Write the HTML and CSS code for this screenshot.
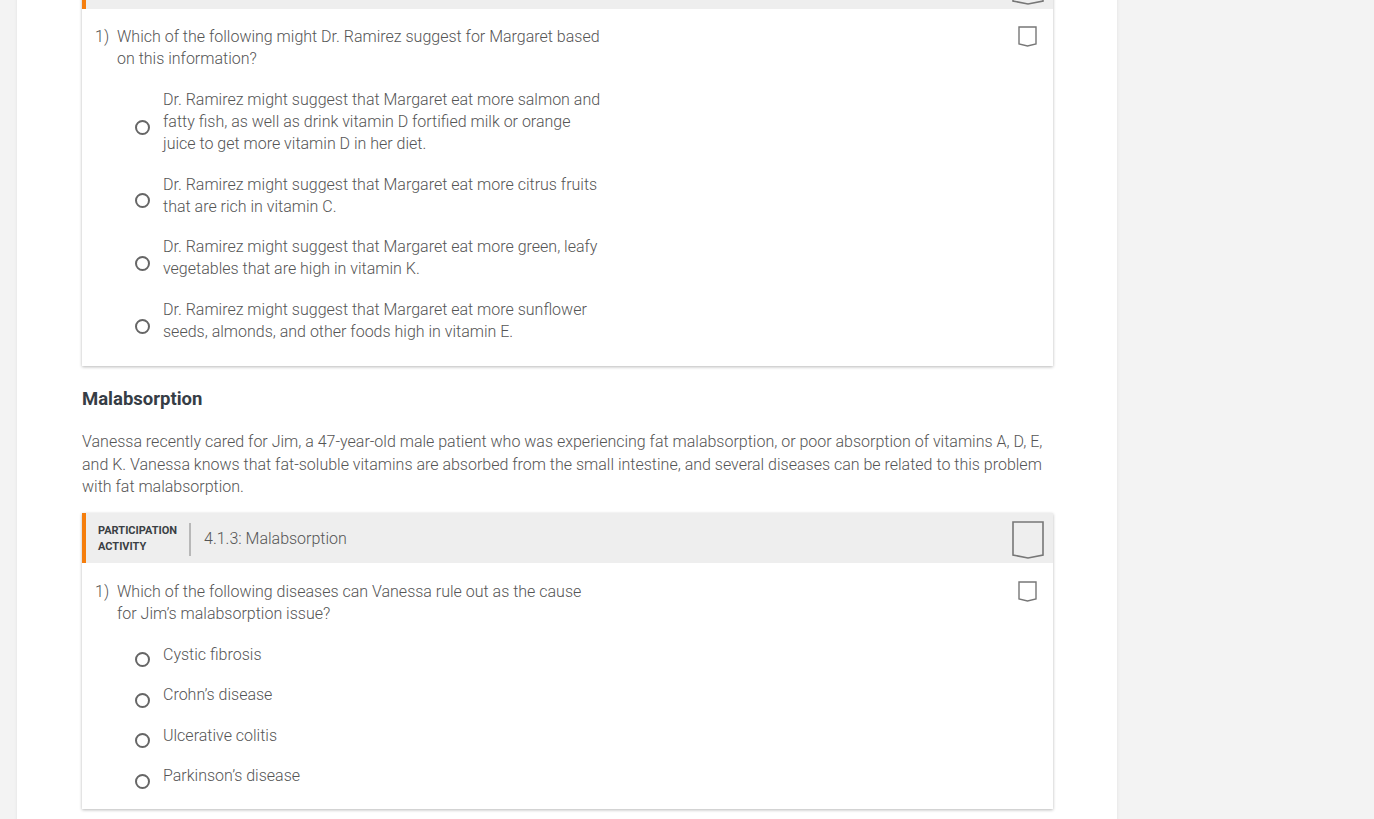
FILE: index.html
```html
<!DOCTYPE html>
<html lang="en">
<head>
<meta charset="utf-8">
<title>Fat-soluble vitamins</title>
<link rel="stylesheet" href="styles.css">
</head>
<body>
<div class="page">
  <div class="content">
    <section class="card">
      <div class="card-header">
        <div class="header-fill"></div>
        <svg class="bookmark big" viewBox="0 0 32 38"><path d="M1 1 H31 V34 L16 37 L1 34 Z" fill="none" stroke="#777" stroke-width="1.6"/></svg>
      </div>
      <div class="card-body first">
        <div class="question">
          <div class="qtext"><span class="num">1)</span><span class="qlabel">Which of the following might Dr. Ramirez suggest for Margaret based on this information?</span></div>
          <svg class="bookmark small" viewBox="0 0 19 21"><path d="M1 1 H18 V18 L9.5 20 L1 18 Z" fill="none" stroke="#777" stroke-width="1.4"/></svg>
        </div>
        <ul class="options">
          <li><span class="radio"></span><span class="opt">Dr. Ramirez might suggest that Margaret eat more salmon and fatty fish, as well as drink vitamin D fortified milk or orange juice to get more vitamin D in her diet.</span></li>
          <li><span class="radio"></span><span class="opt">Dr. Ramirez might suggest that Margaret eat more citrus fruits that are rich in vitamin C.</span></li>
          <li><span class="radio"></span><span class="opt">Dr. Ramirez might suggest that Margaret eat more green, leafy vegetables that are high in vitamin K.</span></li>
          <li><span class="radio"></span><span class="opt">Dr. Ramirez might suggest that Margaret eat more sunflower seeds, almonds, and other foods high in vitamin E.</span></li>
        </ul>
      </div>
    </section>

    <h2 class="heading">Malabsorption</h2>
    <p class="para">Vanessa recently cared for Jim, a 47-year-old male patient who was experiencing fat malabsorption, or poor absorption of vitamins A, D, E, and K. Vanessa knows that fat-soluble vitamins are absorbed from the small intestine, and several diseases can be related to this problem with fat malabsorption.</p>

    <section class="card">
      <div class="card-header">
        <div class="kind">PARTICIPATION<br>ACTIVITY</div>
        <div class="divider"></div>
        <div class="title">4.1.3: Malabsorption</div>
        <svg class="bookmark big" viewBox="0 0 32 38"><path d="M1 1 H31 V34 L16 37 L1 34 Z" fill="none" stroke="#777" stroke-width="1.6"/></svg>
      </div>
      <div class="card-body second">
        <div class="question">
          <div class="qtext"><span class="num">1)</span><span class="qlabel">Which of the following diseases can Vanessa rule out as the cause for Jim’s malabsorption issue?</span></div>
          <svg class="bookmark small" viewBox="0 0 19 21"><path d="M1 1 H18 V18 L9.5 20 L1 18 Z" fill="none" stroke="#777" stroke-width="1.4"/></svg>
        </div>
        <ul class="options single">
          <li><span class="radio"></span><span class="opt">Cystic fibrosis</span></li>
          <li><span class="radio"></span><span class="opt">Crohn’s disease</span></li>
          <li><span class="radio"></span><span class="opt">Ulcerative colitis</span></li>
          <li><span class="radio"></span><span class="opt">Parkinson’s disease</span></li>
        </ul>
      </div>
    </section>
  </div>
</div>
</body>
</html>
```

FILE: styles.css
```css
html, body {
  margin: 0;
  padding: 0;
}

body {
  background: #f3f3f3;
  font-family: Roboto, "Liberation Sans", sans-serif;
  font-weight: 300;
  color: #555;
  font-size: 16px;
  line-height: 22px;
  overflow: hidden;
  height: 819px;
}

.page {
  width: 1100px;
  margin-left: 17px;
  background: #fff;
  min-height: 900px;
  box-shadow: 0 0 3px rgba(0, 0, 0, 0.08);
}

.content {
  margin-left: 65px;
  width: 971px;
  margin-top: -41px;
  padding-bottom: 40px;
}

.card {
  background: #fff;
  box-shadow: 0 1px 3px rgba(0, 0, 0, 0.28);
}

.card-header {
  height: 50px;
  background: #eeeeee;
  border-left: 4px solid #f57e0d;
  display: flex;
  align-items: center;
  padding-left: 12px;
  padding-right: 9px;
}

.header-fill {
  flex: 1;
}

.kind {
  font-family: Roboto, "Liberation Sans", sans-serif;
  font-weight: 700;
  font-size: 11px;
  line-height: 16px;
  color: #3a3f44;
  width: 80px;
  margin-top: 2px;
}

.divider {
  width: 2px;
  height: 33px;
  background: #b8b8b8;
  margin-left: 11px;
  margin-right: 13px;
  margin-top: 3px;
}

.title {
  flex: 1;
  font-size: 16px;
  color: #555;
  margin-top: 3px;
}

.bookmark {
  display: block;
  flex: none;
}

.bookmark.big {
  width: 32px;
  height: 38px;
  align-self: flex-start;
  margin-top: 8px;
}

.bookmark.small {
  width: 19px;
  height: 21px;
}

.card-body {
  padding: 17px 16px 23px 13px;
}

.card-body.second {
  padding-top: 18px;
  padding-bottom: 22px;
}

.question {
  display: flex;
  justify-content: space-between;
  align-items: flex-start;
}

.qtext {
  display: flex;
  width: 507px;
}

.num {
  width: 22px;
  flex: none;
}

.qlabel {
  flex: 1;
}

.options {
  list-style: none;
  margin: 19px 0 0 0;
  padding: 0 0 0 40px;
  display: flex;
  flex-direction: column;
  gap: 18.7px;
}

.options.single {
  gap: 18.6px;
}

.options li {
  display: flex;
  align-items: center;
}

.radio {
  width: 11px;
  height: 11px;
  border: 2px solid #666;
  border-radius: 50%;
  flex: none;
  margin-top: 5px;
  margin-bottom: -5px;
  margin-right: 13px;
}

.opt {
  width: 440px;
}

.heading {
  font-family: Roboto, "Liberation Sans", sans-serif;
  font-weight: 700;
  font-size: 18.5px;
  line-height: 24px;
  color: #363d45;
  margin: 21px 0 0 0;
}

.para {
  margin: 20px 0 14px 0;
  line-height: 22.5px;
}
```
